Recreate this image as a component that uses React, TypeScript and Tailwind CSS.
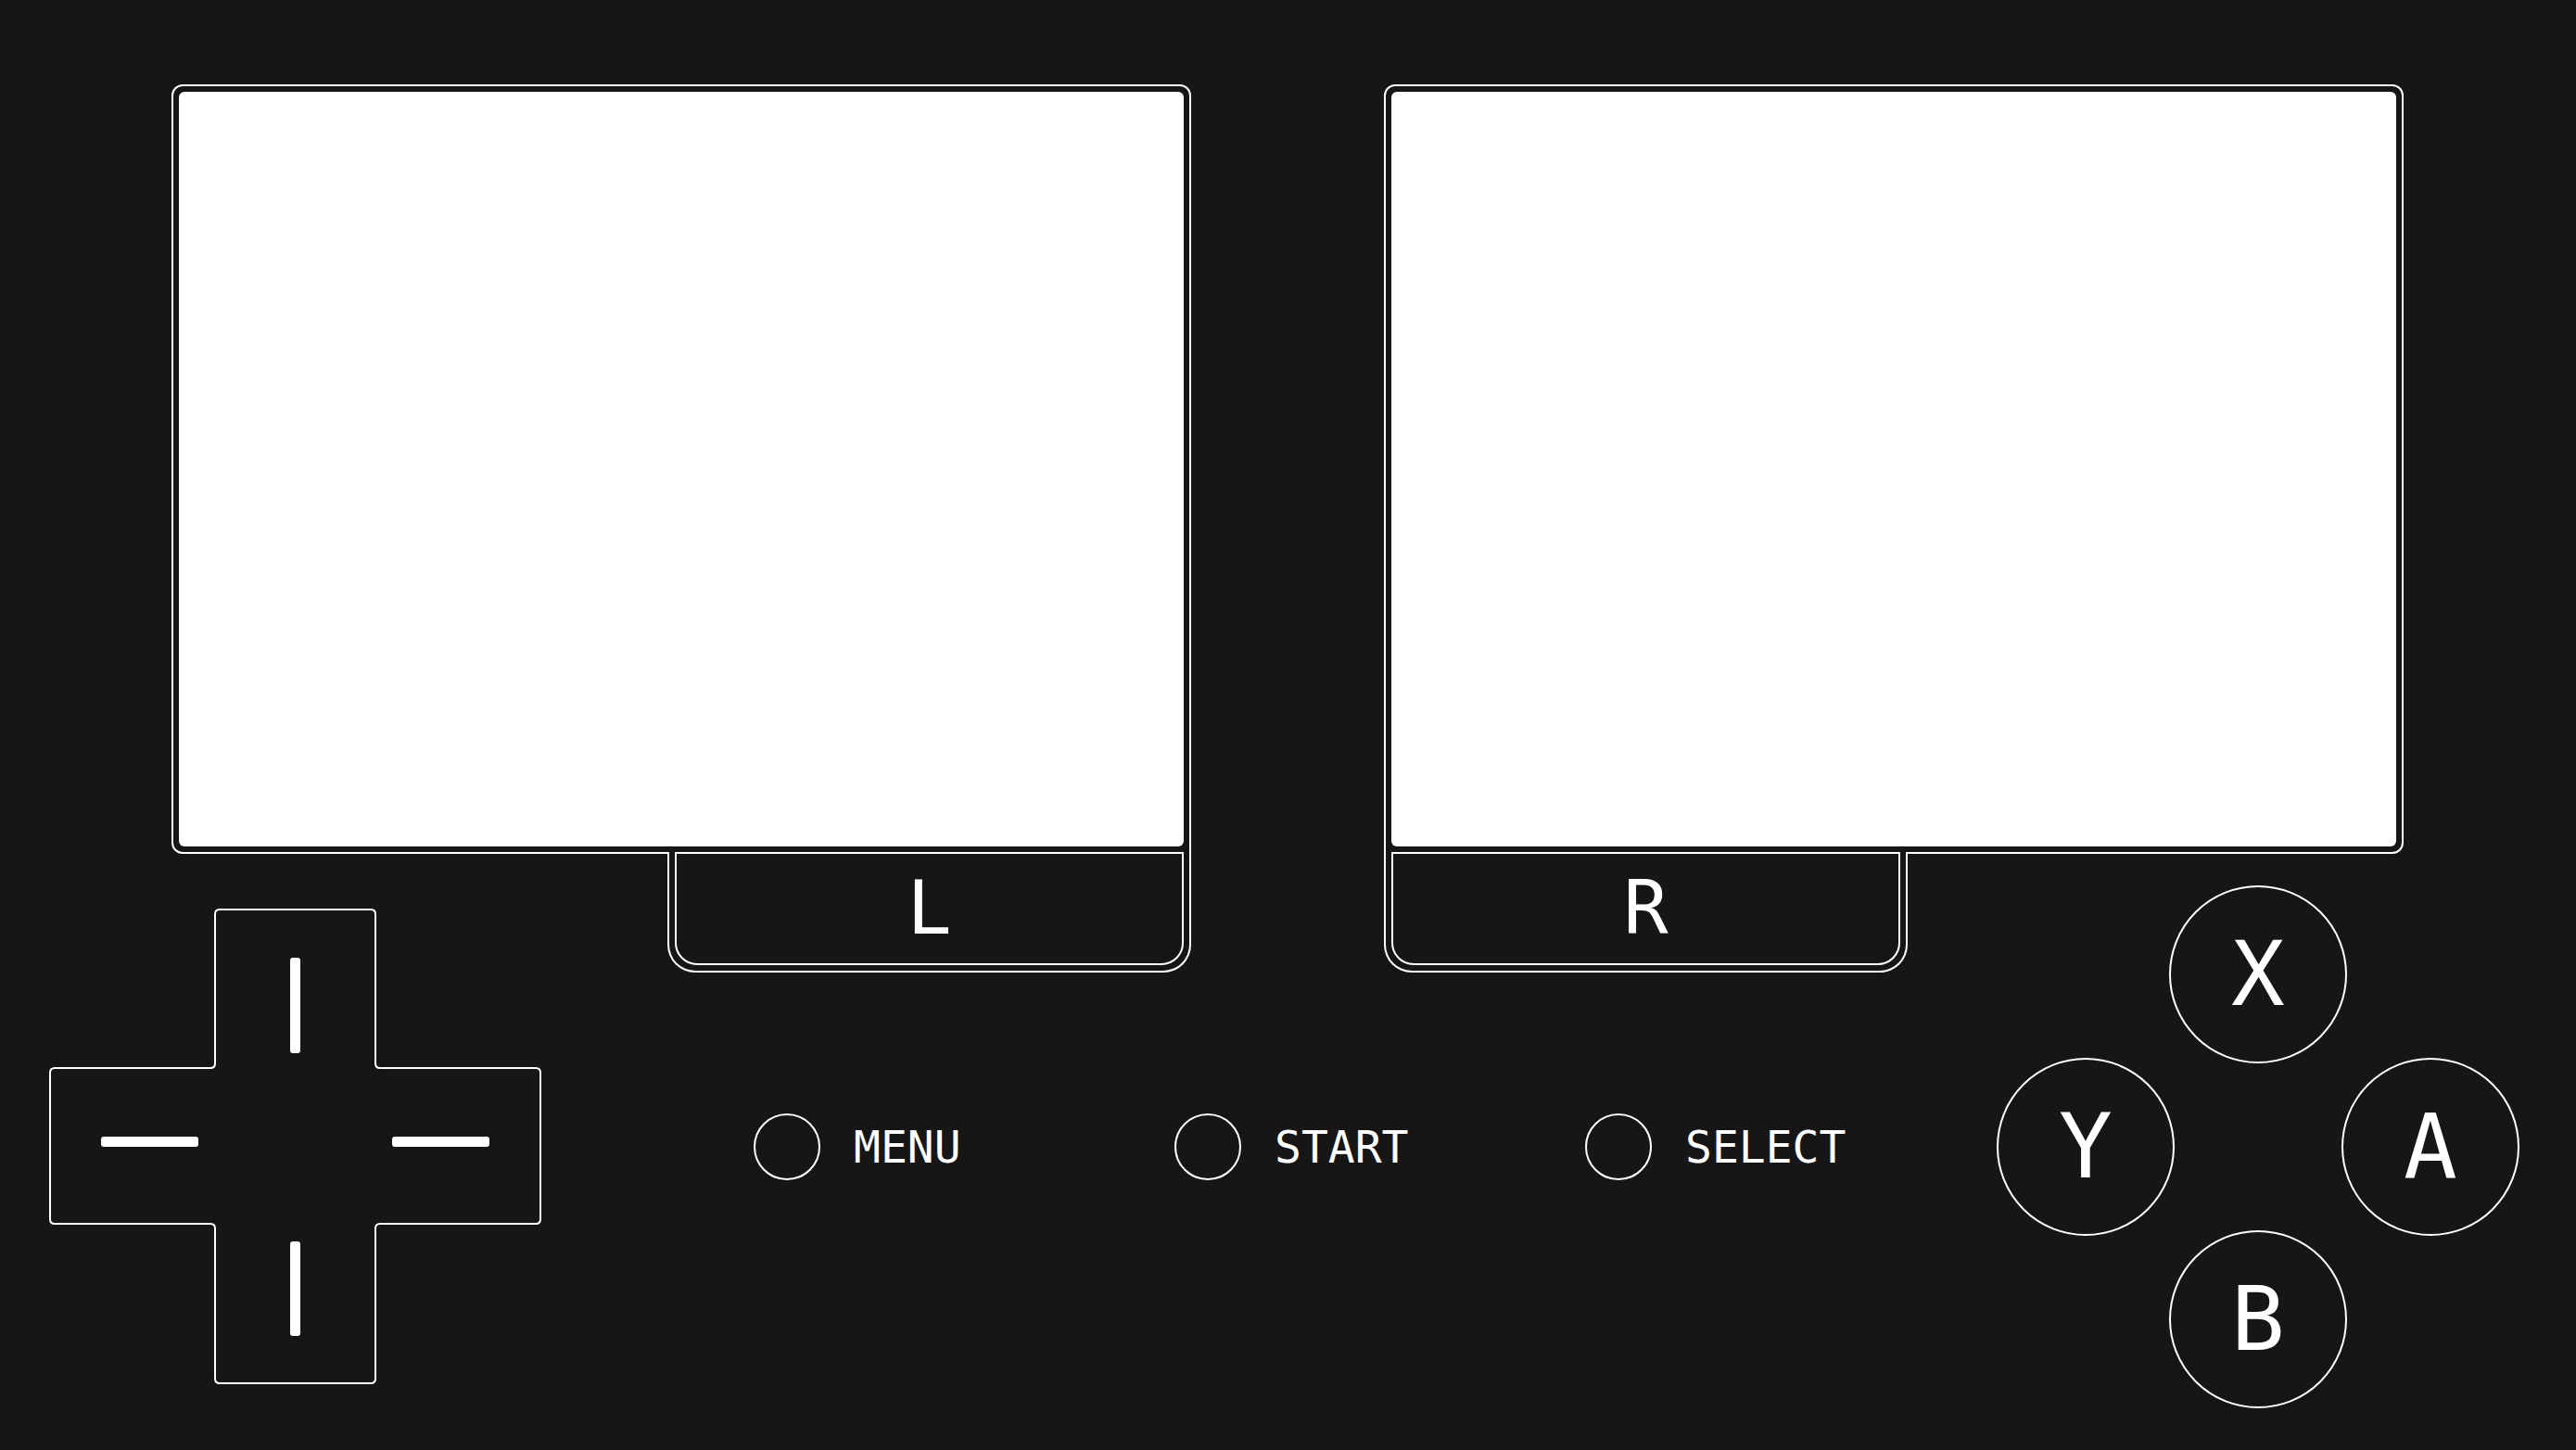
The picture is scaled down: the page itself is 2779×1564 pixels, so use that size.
import type { ReactNode } from 'react';

type Point = [number, number];

const mono = "font-['DejaVu_Sans_Mono',monospace]";

// d-pad outline, in svg coords (stroke centred on the lines)
const dpadPoints: Point[] = [
  [179, 1],
  [352, 1],
  [352, 172],
  [530, 172],
  [530, 340],
  [352, 340],
  [352, 512],
  [179, 512],
  [179, 340],
  [1, 340],
  [1, 172],
  [179, 172],
];

function toward(from: Point, to: Point, r: number): string {
  const dx = to[0] - from[0];
  const dy = to[1] - from[1];
  const len = Math.hypot(dx, dy) || 1;
  return `${from[0] + (dx / len) * r} ${from[1] + (dy / len) * r}`;
}

function roundedPath(pts: Point[], r: number) {
  let d = '';
  pts.forEach((p, i) => {
    const prev = pts[(i + pts.length - 1) % pts.length];
    const next = pts[(i + 1) % pts.length];
    d += `${i === 0 ? 'M' : 'L'}${toward(p, prev, r)} Q${p[0]} ${p[1]} ${toward(p, next, r)} `;
  });
  return d + 'Z';
}

function DPad() {
  return (
    <svg width={531} height={514} viewBox="0 0 531 514" className="shrink-0">
      <path d={roundedPath(dpadPoints, 5)} fill="none" stroke="white" strokeWidth={2} />
      <rect x={260} y={53} width={11} height={103} rx={3} fill="white" />
      <rect x={260} y={359} width={11} height={102} rx={3} fill="white" />
      <rect x={56} y={246} width={105} height={11} rx={3} fill="white" />
      <rect x={370} y={246} width={105} height={11} rx={3} fill="white" />
    </svg>
  );
}

interface ScreenProps {
  label: string;
  side: 'left' | 'right';
}

function Screen({ label, side }: ScreenProps) {
  const tabOnRight = side === 'right';
  return (
    <div className={`flex w-[1100px] flex-col ${tabOnRight ? 'items-end' : 'items-start'}`}>
      <div
        className={`h-[830px] w-full rounded-t-[12px] border-2 border-white p-[6px] ${
          tabOnRight ? 'rounded-bl-[12px]' : 'rounded-br-[12px]'
        }`}
      >
        <div className="h-full w-full rounded-[6px] bg-white" />
      </div>
      <div className="-mt-[2px] w-[565px] rounded-b-[30px] border-2 border-t-0 border-white bg-[#161616] px-[6px] pb-[6px]">
        <div
          className={`flex h-[122px] items-center justify-center rounded-b-[24px] border-2 border-white text-[80px] leading-none text-white ${mono}`}
        >
          {label}
        </div>
      </div>
    </div>
  );
}

function SmallButton({ label, width }: { label: string; width: string }) {
  return (
    <div className={`flex items-center gap-[36px] ${width}`}>
      <div className="h-[72px] w-[72px] shrink-0 rounded-full border-2 border-white" />
      <span className={`text-[48px] leading-none text-white ${mono}`}>{label}</span>
    </div>
  );
}

function FaceButton({ children, className }: { children: ReactNode; className: string }) {
  return (
    <div
      className={`-m-[3px] flex h-[192px] w-[192px] items-center justify-center rounded-full border-2 border-white text-[96px] leading-none text-white ${mono} ${className}`}
    >
      {children}
    </div>
  );
}

export default function App() {
  return (
    <div className="h-screen w-full overflow-hidden bg-[#161616]">
      {/* screens */}
      <div className="flex gap-[208px] pl-[185px] pt-[91px]">
        <Screen label="L" side="right" />
        <Screen label="R" side="left" />
      </div>

      {/* controls */}
      <div className="-mt-[91px] flex items-center pl-[53px]">
        <DPad />
        <div className="ml-[229px] flex items-center">
          <SmallButton label="MENU" width="w-[454px]" />
          <SmallButton label="START" width="w-[443px]" />
          <SmallButton label="SELECT" width="w-[447px]" />
        </div>
        <div className="grid grid-cols-[repeat(3,186px)] grid-rows-[repeat(3,186px)]">
          <FaceButton className="col-start-2 row-start-1">X</FaceButton>
          <FaceButton className="col-start-1 row-start-2">Y</FaceButton>
          <FaceButton className="col-start-3 row-start-2">A</FaceButton>
          <FaceButton className="col-start-2 row-start-3">B</FaceButton>
        </div>
      </div>
    </div>
  );
}
